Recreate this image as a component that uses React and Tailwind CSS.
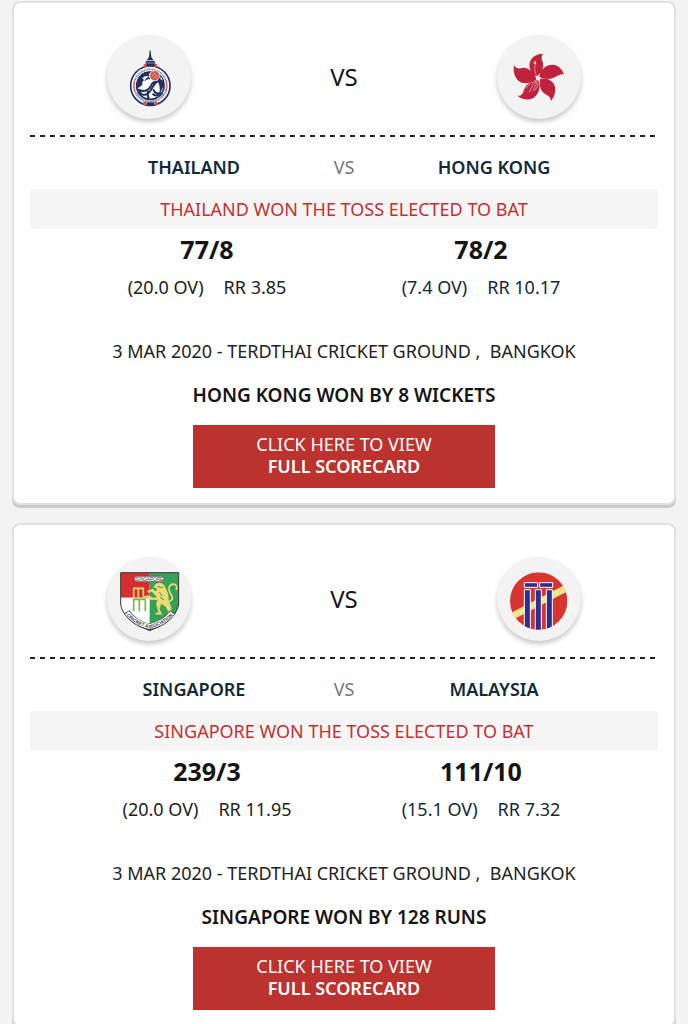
function ThailandLogo() {
  return (
    <svg viewBox="21 16 252 252" className="size-full" role="img" aria-label="Thailand">
      <g fill="#232f63">
        <path d="M150 60l2 4 2 18 6 9H141l6-9 2-18z" />
        <path d="M139 93h24l3 6h-30zM137 101h28l4 8h-36z" />
      </g>
      <circle cx="151" cy="168" r="59" fill="#fff" stroke="#232f63" strokeWidth="5" />
      <circle cx="151" cy="168" r="53" fill="none" stroke="#dfe2ec" strokeWidth="2" />
      <circle cx="151" cy="168" r="49" fill="none" stroke="#6b7397" strokeWidth="5" strokeDasharray="3 2" />
      <path d="M104 152q-5 17 0 34M198 152q5 17 0 34" fill="none" stroke="#d9604c" strokeWidth="3" />
      <circle cx="151" cy="168" r="41" fill="#fff" stroke="#232f63" strokeWidth="5" />
      <path d="M114 150c5-19 22-27 37-23-5 5-5 13 0 22-8-1-13 1-15 5-7-4-10 3-9 12-5 2-9 8-15 10-2-8-1-18 2-26z" fill="#232f63" />
      <path d="M127 146c6-7 14-9 20-5-8 2-11 6-13 12z" fill="#fff" />
      <path d="M174 131c15 8 21 23 17 37l-12 26c0-15 2-25-5-37z" fill="#232f63" />
      <path d="M182 139l6 13-7-3z" fill="#fff" />
      <path d="M117 181c18 7 31-1 36-13 4-9 11-13 20-13-10 5-13 13-18 22-8 14-19 21-29 17-5-3-8-7-9-13zM144 183c-2 10-2 16 3 25M160 179c3 10 8 14 19 12-6 8-15 9-21 1" fill="none" stroke="#232f63" strokeWidth="6" />
      <circle cx="164" cy="138" r="15" fill="#cc5748" stroke="#fff" strokeWidth="2" />
      <path d="M154 132l16 16M159 127l15 15M153 143l16-16M160 149l15-15" stroke="#efb3a8" strokeWidth="1.5" />
      <path id="thai-ring" d="M104 187q47 57 94 0" fill="none" />
      <text fontSize="9" fill="#232f63" fontFamily="Liberation Sans">
        <textPath href="#thai-ring" startOffset="6">ASSOCIATION OF THAI</textPath>
      </text>
      <path d="M131 104h9v9h-9zM163 104h9v9h-9zM130 216h10v10h-10zM163 216h10v10h-10z" fill="#d9503e" />
      <path d="M141 218h21v11h-21z" fill="#232f63" />
    </svg>
  );
}

function HongKongLogo() {
  return (
    <svg viewBox="21 16 252 252" className="size-full" role="img" aria-label="Hong Kong">
      <g fill="#c0223d">
        <path d="M137 140C122 130 115 112 120 96C127 79 142 73 160 72C154 78 153 84 157 94C163 110 158 126 143 138Z" />
        <path d="M148 140C151 118 170 104 190 105C206 107 217 119 222 135C212 131 205 137 196 142C180 151 162 148 148 142Z" />
        <path d="M151 147C171 143 191 153 195 172C198 189 192 202 183 214C182 203 177 199 169 195C152 187 146 168 151 147Z" />
        <path d="M145 152C153 172 147 194 130 205C115 213 95 210 83 198C95 199 98 192 101 183C107 164 125 151 145 152Z" />
        <path d="M137 151C118 164 94 164 82 150C72 138 69 121 72 107C78 117 86 118 96 115C115 111 131 128 139 147Z" />
      </g>
      <g fill="none" stroke="#f4f4f4" strokeWidth="1.5">
        <path d="M136 101q-6 17 3 37M143 155q-16 7-25 33M143 158q-9 9-14 27M139 155q-22 5-30 21M145 160q-2 11-10 22" />
      </g>
      <circle cx="135" cy="99" r="4" fill="#f8d98c" />
    </svg>
  );
}

function SingaporeLogo() {
  const shield = 'M62 63H236V154C235 189 198 216 149 237C100 216 63 189 62 154Z';
  return (
    <svg viewBox="21 16 252 252" className="size-full" role="img" aria-label="Singapore">
      <clipPath id="sg-shield">
        <path d={shield} />
      </clipPath>
      <g clipPath="url(#sg-shield)">
        <path d="M62 62h87v76H62z" fill="#d92c2e" />
        <path d="M62 138h87v100H62z" fill="#fff" />
        <path d="M149 62h88v176h-88z" fill="#35a057" />
      </g>
      <path d={shield} fill="none" stroke="#333" strokeWidth="3" />
      <g fill="none" strokeWidth="5">
        <path d="M101 141v-31h29v31M115 111v30" stroke="#eddc69" />
        <path d="M101 179v-36h35v36M118 144v35" stroke="#75b947" />
      </g>
      <path d="M163 102c5-11 20-12 29-3l8 15c5 11 7 22 6 33l8 20 0 19h-14l5-6-8-14-13-10-5 16 8 17h-20l-1-5 9-2-7-24 4-13-20 0-8-7-13 2-1-6 17-3 12 7 12-2-16-16-10 4-4-7 17-6 8 7 5-2-3-7-9-1z" fill="#ebdd75" stroke="#8e964a" strokeWidth="1" />
      <path d="M205 151c20-8 10-19 5-28-6-12-4-22 6-25 13-3 17 8 12 17" fill="none" stroke="#ebdd75" strokeWidth="5" />
      <path d="M173 104l9 4 7-3M178 121l9 13M180 137l12 8" fill="none" stroke="#52864b" strokeWidth="3" />
      <rect x="104" y="74" width="87" height="16" rx="6" fill="#fff" stroke="#444" strokeWidth="2" />
      <text x="148" y="87" textAnchor="middle" fontSize="14" fontFamily="Liberation Sans" fill="#333">SINGAPORE</text>
      <path d="M80 181Q102 215 149 226Q196 215 218 181" fill="none" stroke="#333" strokeWidth="19" />
      <path d="M81 183Q104 214 149 225Q194 214 217 183" fill="none" stroke="#fff" strokeWidth="15" />
      <path id="sg-ribbon" d="M77 188Q102 219 149 230Q196 219 221 188" fill="none" />
      <text fontSize="14" fontFamily="Liberation Sans" fontWeight="700" fill="#333">
        <textPath href="#sg-ribbon" startOffset="50%" textAnchor="middle">CRICKET ASSOCIATION</textPath>
      </text>
    </svg>
  );
}

function MalaysiaLogo() {
  return (
    <svg viewBox="21 16 252 252" className="size-full" role="img" aria-label="Malaysia">
      <clipPath id="my-circle">
        <circle cx="146" cy="148" r="86" />
      </clipPath>
      <g clipPath="url(#my-circle)">
        <path d="M60 62h172v172H60z" fill="#d93530" />
        <path d="M62 196L235 106" stroke="#fff8c4" strokeWidth="21" />
        <path d="M62 189L235 99M62 196L235 106M62 203L235 113" stroke="#f0dc61" strokeWidth="4" />
        <g fill="#2b2f91" stroke="#fff" strokeWidth="3">
          <path d="M103 93h40v14h-40zM149 93h39v14h-39z" />
          <path d="M103 114h18v122h-18zM136 114h18v122h-18zM169 114h18v122h-18z" />
        </g>
      </g>
    </svg>
  );
}

const matches = [
  {
    home: { name: 'Thailand', logo: ThailandLogo, score: '77/8', overs: '20.0', runRate: '3.85' },
    away: { name: 'Hong Kong', logo: HongKongLogo, score: '78/2', overs: '7.4', runRate: '10.17' },
    toss: 'Thailand won the toss elected to bat',
    date: '3 Mar 2020',
    ground: 'Terdthai Cricket Ground',
    city: 'Bangkok',
    result: 'Hong Kong won by 8 wickets',
  },
  {
    home: { name: 'Singapore', logo: SingaporeLogo, score: '239/3', overs: '20.0', runRate: '11.95' },
    away: { name: 'Malaysia', logo: MalaysiaLogo, score: '111/10', overs: '15.1', runRate: '7.32' },
    toss: 'Singapore won the toss elected to bat',
    date: '3 Mar 2020',
    ground: 'Terdthai Cricket Ground',
    city: 'Bangkok',
    result: 'Singapore won by 128 runs',
  },
];

function TeamBadge({ logo: Logo }) {
  return (
    <div className="size-[84px] rounded-full bg-[#f3f3f3] shadow-[0_3px_5px_rgba(0,0,0,0.22)]">
      <Logo />
    </div>
  );
}

function Score({ team, className }) {
  return (
    <div>
      <div className="text-[25px] leading-10 font-bold text-[#151515]">{team.score}</div>
      <div className={`flex justify-center gap-5 text-lg leading-9 ${className}`}>
        <span>({team.overs} OV)</span>
        <span>RR {team.runRate}</span>
      </div>
    </div>
  );
}

function MatchCard({ match }) {
  const { home, away } = match;

  return (
    <article className="rounded-lg border-2 border-[#e0e0e0] bg-white px-4 pt-8 pb-[15px] text-center uppercase shadow-[0_3px_0_#cccccc]">
      <div className="flex items-center justify-between px-[77px]">
        <TeamBadge logo={home.logo} />
        <span className="text-2xl text-[#151515]">VS</span>
        <TeamBadge logo={away.logo} />
      </div>

      <div className="mt-4 h-0.5 bg-[repeating-linear-gradient(90deg,#222_0_5px,transparent_5px_10px)]" />

      <div className="mt-3 grid grid-cols-3 px-[89px] text-lg leading-9">
        <h2 className="font-semibold whitespace-nowrap text-[#12293a]">{home.name}</h2>
        <span className="text-[#777777]">VS</span>
        <h2 className="font-semibold whitespace-nowrap text-[#12293a]">{away.name}</h2>
      </div>

      <p className="mt-1 rounded bg-[#f5f5f5] text-lg leading-10 text-[#bf3333]">{match.toss}</p>

      <div className="grid grid-cols-2 px-10">
        <Score team={home} className="text-[#222222]" />
        <Score team={away} className="text-[#12293a]" />
      </div>

      <p className="mt-7 text-lg leading-9 whitespace-pre text-[#222222]">
        {match.date} - {match.ground} ,  {match.city}
      </p>
      <p className="mt-2 text-[19px] leading-9 font-semibold text-[#151515]">{match.result}</p>

      <a href="#scorecard" className="mx-auto mt-3 block w-[302px] bg-[#bb322e] pt-2 pb-[11px] text-lg leading-[22px] text-white">
        Click here to view
        <span className="block font-semibold">Full scorecard</span>
      </a>
    </article>
  );
}

export default function App() {
  return (
    <main className="flex min-h-screen flex-col gap-[18px] bg-[#f3f3f3] px-3 pt-px font-['Noto_Sans',sans-serif]">
      {matches.map((match) => (
        <MatchCard key={match.result} match={match} />
      ))}
    </main>
  );
}
